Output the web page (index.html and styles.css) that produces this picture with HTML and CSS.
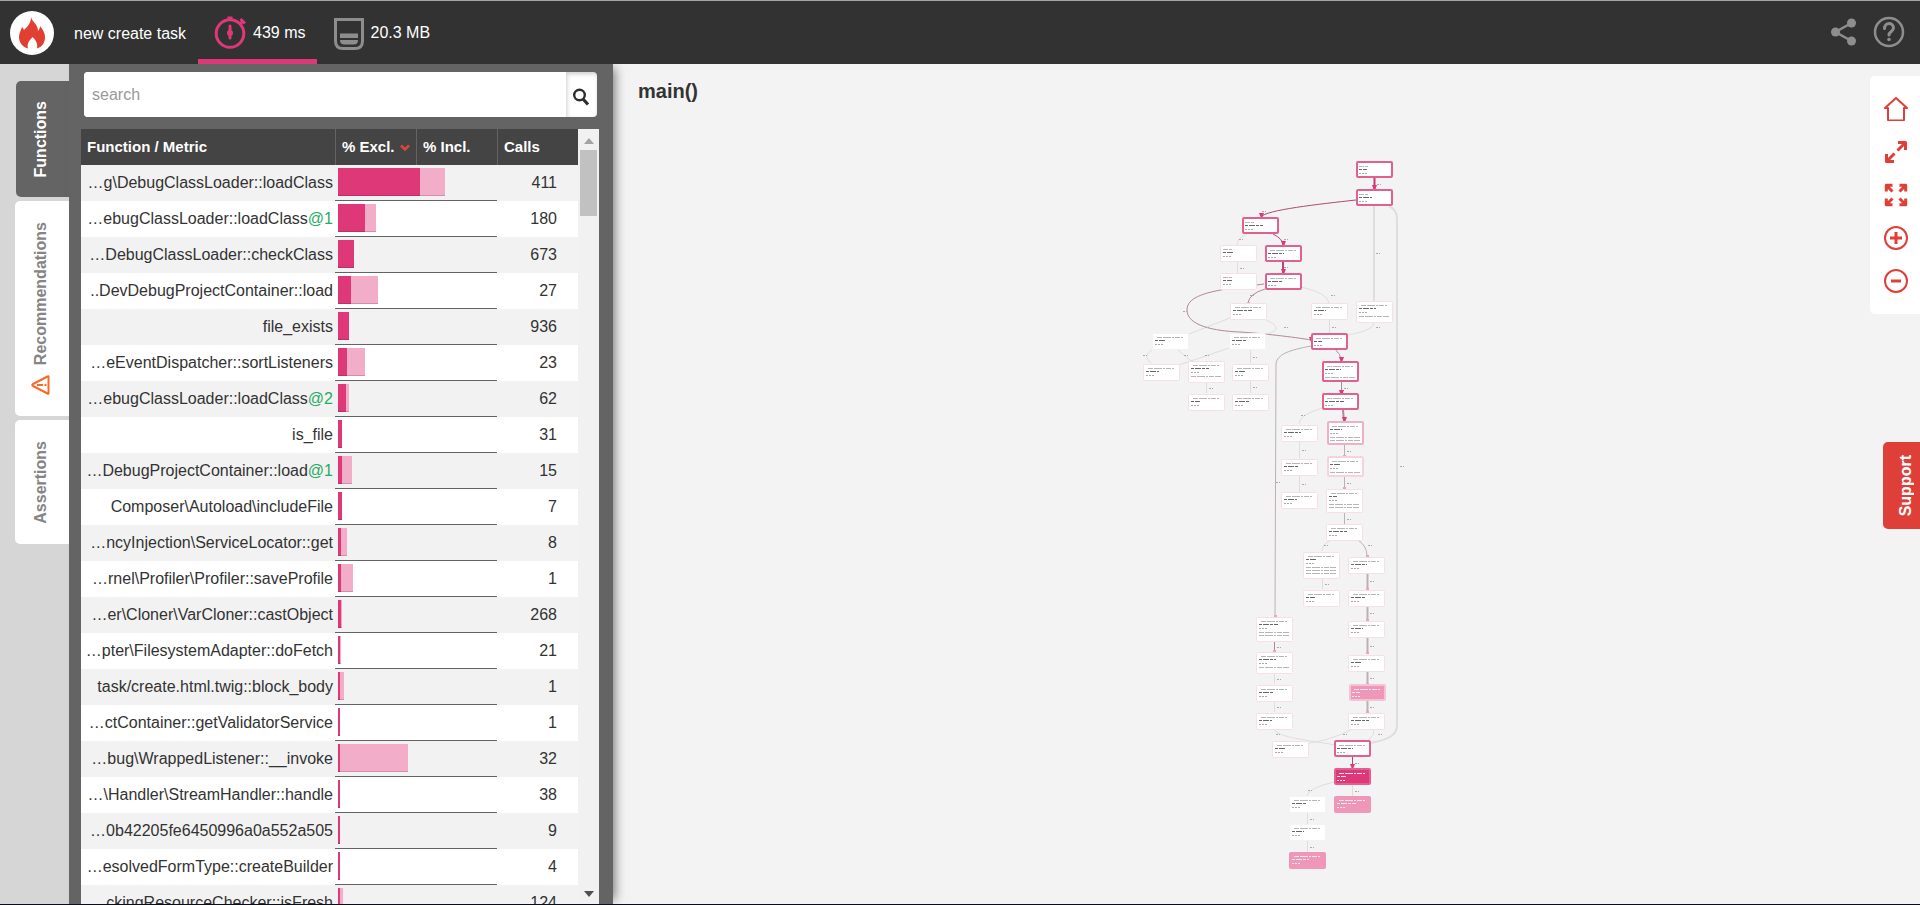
FILE: index.html
```html
<!DOCTYPE html>
<html lang="en">
<head>
<meta charset="utf-8">
<title>new create task</title>
<link rel="stylesheet" href="styles.css">
</head>
<body>
<header class="topbar">
  <a class="logo" href="#" aria-label="Home">
    <svg width="44" height="44" viewBox="0 0 44 44"><circle cx="22" cy="22" r="22" fill="#fff"/><path d="M21 6C22 11 28 13 28 20C29 19 30 17 30 15C33 19 35 22 35 26C35 32 32 36 27 37.500C28 33 26 29 22.500 26C20 29 16.500 32 18 37.500C12 36 9 31 9 26C9 22 11 19 12 16C13 17 13.500 18 14 19C18 15 21 12 21 6Z" fill="#e13f31"/></svg>
  </a>
  <h1 class="title">new create task</h1>
  <nav class="metrics">
    <a class="metric active" href="#">
      <svg width="34" height="34" viewBox="0 0 34 34" fill="none" stroke="#de3879" stroke-width="3"><circle cx="16" cy="18.500" r="13.800"/><path d="M13.500 3.500h5" stroke-width="4"/><path d="M26.500 4l4.500 4.500M29 6l-3 3"/><path d="M16 11v12" stroke-linecap="round"/><circle cx="16" cy="18" r="1.500"/></svg>
      <span>439 ms</span>
    </a>
    <a class="metric" href="#">
      <svg width="30" height="32" viewBox="0 0 30 32"><path d="M1.500 1.500h27V23q0 7.500-7.500 7.500H9Q1.500 30.500 1.500 23Z" fill="none" stroke="#8d8d8d" stroke-width="3"/><path d="M6 15.500h18v4.500H6zM6 22h18q0 4.500-4.500 4.500h-9Q6 26.500 6 22z" fill="#8d8d8d"/></svg>
      <span>20.3 MB</span>
    </a>
  </nav>
  <div class="actions">
    <button class="icon-btn" aria-label="Share"><svg width="26" height="28" viewBox="0 0 26 28" fill="#8e8e8e"><path d="M20.500 5L4.500 14L20.500 23" fill="none" stroke="#8e8e8e" stroke-width="2.500"/><circle cx="20.500" cy="5" r="4.500"/><circle cx="4.500" cy="14" r="4.500"/><circle cx="20.500" cy="23" r="4.500"/></svg></button>
    <button class="icon-btn" aria-label="Help"><svg width="32" height="32" viewBox="0 0 32 32" fill="none" stroke="#8e8e8e" stroke-width="2.500"><circle cx="16" cy="16" r="14"/><path d="M11.500 12.500C11.500 6 20.500 6 20.500 12C20.500 15.500 16 15.500 16 19" stroke-width="3" stroke-linecap="round"/><circle cx="16" cy="23.500" r="1.800" fill="#8e8e8e" stroke="none"/></svg></button>
  </div>
</header>
<main class="workspace">
  <nav class="tabs">
    <button class="tab selected"><span>Functions</span></button>
    <button class="tab"><span>Recommendations</span>
      <svg width="20" height="20" viewBox="0 0 20 20" fill="none" stroke="#fb6a22" stroke-width="2"><path d="M17.500 1.500V18.500Q17.500 19 16.500 18.500L2 11Q.500 10 2 9L16.500 1.500Q17.500 1 17.500 1.500Z" stroke-linejoin="round"/><path d="M6 10h6M13.500 10h2"/></svg>
    </button>
    <button class="tab"><span>Assertions</span></button>
  </nav>
  <section class="panel">
    <form class="search">
      <input type="text" placeholder="search" aria-label="search">
      <button type="button" aria-label="Run search"><svg width="18" height="20" viewBox="0 0 18 20" fill="none" stroke="#2d2d2d"><circle cx="7.500" cy="8" r="5.300" stroke-width="2.400"/><path d="M11 12l5 5.500" stroke-width="3.200"/></svg></button>
    </form>
    <div class="list">
      <div class="viewport">
        <table>
          <colgroup><col><col class="num"><col class="num"><col class="num"></colgroup>
          <thead><tr><th>Function / Metric</th><th>% Excl. <svg width="10" height="8" viewBox="0 0 10 8"><path d="M1 1.500l4 4 4-4" fill="none" stroke="#d8483f" stroke-width="2.500"/></svg></th><th>% Incl.</th><th>Calls</th></tr></thead>
          <tbody id="rows"></tbody>
        </table>
      </div>
      <div class="scrollbar">
        <svg width="10" height="6" viewBox="0 0 10 6"><path d="M0 6L5 0L10 6Z" fill="#a3a3a3"/></svg>
        <div class="thumb"></div>
        <svg class="down" width="10" height="6" viewBox="0 0 10 6"><path d="M0 0L5 6L10 0Z" fill="#505050"/></svg>
      </div>
    </div>
  </section>
  <section class="canvas">
    <h2>main()</h2>
    <svg id="graph" class="graph" viewBox="613 64 1307 840" preserveAspectRatio="xMidYMin meet" role="img" aria-label="Call graph"></svg>
    <div class="tools">
      <button class="icon-btn" aria-label="Reset"><svg width="24" height="24" viewBox="0 0 24 24"><path d="M4 11V22.500Q4 23.500 5 23.500H19Q20 23.500 20 22.500V11H23L12 1L1 11Z"/></svg></button>
      <button class="icon-btn" aria-label="Expand"><svg width="24" height="24" viewBox="0 0 24 24" stroke-width="3"><path class="heavy" d="M13.500 10.500L20 4M14 2.500h7.500V10M10.500 13.500L4 20M2.500 14v7.500H10"/></svg></button>
      <button class="icon-btn" aria-label="Fit"><svg width="24" height="24" viewBox="0 0 24 24"><path class="heavy" d="M8.500 8.500L3 3M2.300 8.500V2.300H8.500M15.500 8.500L21 3M15.500 2.300h6.200V8.500M8.500 15.500L3 21M2.300 15.500v6.200H8.500M15.500 15.500L21 21M21.700 15.500v6.200H15.500"/></svg></button>
      <button class="icon-btn" aria-label="Zoom in"><svg width="24" height="24" viewBox="0 0 24 24"><circle cx="12" cy="12" r="11"/><path class="heavy" d="M6 12h12M12 6v12"/></svg></button>
      <button class="icon-btn" aria-label="Zoom out"><svg width="24" height="24" viewBox="0 0 24 24"><circle cx="12" cy="12" r="11"/><path class="heavy" d="M7 12h10"/></svg></button>
    </div>
    <button class="support"><span>Support</span></button>
  </section>
</main>
<script src="app.js"></script>
</body>
</html>
```
FILE: styles.css
```css
* { box-sizing: border-box; }
body { margin: 0; height: 100vh; display: flex; flex-direction: column; overflow: hidden; border-top: 1px solid #a2a5a4; border-bottom: 1px solid #0b0d18; background: #f3f3f3; color: #333; font: 16px/20px "Liberation Sans", Arial, sans-serif; }
h1, h2 { margin: 0; }
button { border: 0; padding: 0; font: inherit; background: none; }
svg { display: block; flex: none; }

.topbar { position: relative; z-index: 2; display: flex; align-items: center; height: 63px; flex: none; padding: 0 15px 0 10px; background: #323232; color: #fff; }
.title { margin: 2px 12px 0 20px; font-size: 16px; font-weight: 400; }
.metrics { display: flex; align-self: stretch; }
.metric { display: flex; align-items: center; gap: 7px; padding: 5px 12px 0 17px; color: #fff; text-decoration: none; border-bottom: 5px solid transparent; }
.metric svg { margin-right: -2px; }
.metric + .metric svg { margin: 2px 0 0; }
.metric.active { padding: 5px 11px 0 16px; border-color: #de3879; }
.metric.active svg { margin-bottom: 2px; }
.actions { display: flex; align-items: center; gap: 16px; margin-left: auto; padding-bottom: 2px; }

.workspace { display: flex; flex: 1; min-height: 0; }
.tabs { display: flex; flex-direction: column; align-items: flex-end; gap: 4px; width: 69px; padding-top: 17px; background: #d6d6d6; }
.tab { display: flex; flex-direction: column; align-items: center; gap: 9px; width: 54px; padding: 21px 3px 21px 0; border-radius: 5px 0 0 5px; background: #fff; color: #858585; font-weight: 700; }
.tab.selected { width: 53px; padding: 20px 3px 20px 0; background: #646464; color: #fff; }
.tab span, .support span { writing-mode: vertical-rl; transform: rotate(180deg); }

.panel { display: flex; flex-direction: column; width: 544px; padding: 8px 14px 0 12px; background: #646464; position: relative; z-index: 1; box-shadow: 6px 0 10px -4px rgba(0, 0, 0, .5); }
.search { display: flex; height: 45px; flex: none; margin: 0 2px 12px 3px; overflow: hidden; border-radius: 4px; background: #fff; }
.search input { flex: 1; min-width: 0; padding: 0 8px; border: 0; background: #fff; font: inherit; }
.search input::placeholder { color: #999; }
.search button { display: flex; align-items: center; justify-content: center; width: 31px; padding: 4px 1px 0 0; box-shadow: inset 1px 2px 4px rgba(0, 0, 0, .2); }

.list { display: flex; flex: 1; min-height: 0; }
.viewport { flex: 1; overflow: hidden; background: #fff; }
table { width: 100%; table-layout: fixed; border-collapse: separate; border-spacing: 0; }
.num { width: 81px; }
th { height: 36px; padding: 0 6px; background: #444; color: #fff; font-size: 15px; text-align: left; white-space: nowrap; }
th + th { border-left: 1px solid #646464; }
th svg { display: inline-block; margin-left: 1px; }
td { height: 36px; padding: 0; }
tbody tr:nth-child(odd) { background: #f2f2f2; }
.name { padding: 0 2px 0 0; text-align: right; white-space: nowrap; overflow: hidden; }
.name em { color: #27ab62; font-style: normal; }
.share { padding: 3px 3px 4px; border-bottom: 1px solid #646464; }
.bar { display: flex; height: 28px; }
.bar i { background: #f2adc8; border-bottom: 1px solid #d48ead; }
.bar i:first-child { background: #de3879; border-color: #b5326a; }
.calls { padding: 0 21px 0 0; text-align: right; }

.scrollbar { display: flex; flex-direction: column; align-items: center; width: 21px; padding: 9px 0 7px; background: #f1f1f1; }
.thumb { width: 17px; height: 66px; margin-top: 6px; background: #c1c1c1; }
.down { margin-top: auto; }

.canvas { position: relative; flex: 1; min-width: 0; overflow: hidden; }
.canvas h2 { position: absolute; left: 25px; top: 15px; font-size: 20px; line-height: 24px; }
.graph { width: 100%; height: 100%; }
.tools { position: absolute; top: 12px; right: 0; display: flex; flex-direction: column; align-items: center; gap: 19px; width: 50px; padding: 21px 0 21px 1px; border-radius: 5px 0 0 5px; background: #fff; }
.tools svg { fill: none; stroke: #e03e38; stroke-width: 2; stroke-linejoin: round; }
.tools .heavy { stroke-width: 3; }
.support { position: absolute; right: 0; top: 378px; display: flex; justify-content: center; width: 37px; padding: 13px 0 13px 9px; border-radius: 5px 0 0 5px; background: #de3f39; color: #fff; font-weight: 700; }

.edge { fill: none; stroke: #dedede; stroke-width: 1; }
.edge.wide { stroke-width: 2; }
.edge.mid { stroke: #bcb0b5; }
.edge.warm { stroke: #b3879a; }
.edge.hot { stroke: #a94c72; }
.edge.main { stroke: #c23a70; stroke-width: 2; }
.tip { fill: #de3879; }
.tip.soft { fill: #e9a5be; }
.node { fill: #fff; stroke: #f8dfe7; }
.node.faint { stroke: #f7f1f3; }
.node.light { stroke: #f7d3df; stroke-width: 2; }
.node.pale { stroke: #efafc7; stroke-width: 2; }
.node.strong { stroke: #e2608f; stroke-width: 2; }
.node.pink { fill: #ee97b9; stroke: #ee97b9; }
.node.ring { fill: #ee97b9; stroke: #f4c3d5; stroke-width: 2; }
.node.full { fill: #de3879; stroke: #e2608f; stroke-width: 2; }
.ink { stroke: #b5b5b5; stroke-dasharray: 5 1 8 1 2 1; }
.ink.bold { stroke: #666; stroke-dasharray: 3 1 6 1; }
.ink.cost { stroke: #a9a9ae; stroke-dasharray: 2 1; }
.ink.white { stroke: #fbe6ee; }
```
FILE: app.js
```js
const rows = [
  ["…g\\DebugClassLoader::loadClass", "", 82, 25, 411],
  ["…ebugClassLoader::loadClass", "@1", 27, 11, 180],
  ["…DebugClassLoader::checkClass", "", 16, 0, 673],
  ["..DevDebugProjectContainer::load", "", 13, 27, 27],
  ["file_exists", "", 11, 0, 936],
  ["…eEventDispatcher::sortListeners", "", 9, 18, 23],
  ["…ebugClassLoader::loadClass", "@2", 8, 3, 62],
  ["is_file", "", 4, 0, 31],
  ["…DebugProjectContainer::load", "@1", 4, 10, 15],
  ["Composer\\Autoload\\includeFile", "", 4, 0, 7],
  ["…ncyInjection\\ServiceLocator::get", "", 3, 6, 8],
  ["…rnel\\Profiler\\Profiler::saveProfile", "", 3, 12, 1],
  ["…er\\Cloner\\VarCloner::castObject", "", 3, 1, 268],
  ["…pter\\FilesystemAdapter::doFetch", "", 2, 1, 21],
  ["task/create.html.twig::block_body", "", 2, 4, 1],
  ["…ctContainer::getValidatorService", "", 2, 0, 1],
  ["…bug\\WrappedListener::__invoke", "", 2, 68, 32],
  ["…\\Handler\\StreamHandler::handle", "", 2, 0, 38],
  ["…0b42205fe6450996a0a552a505", "", 2, 0, 9],
  ["…esolvedFormType::createBuilder", "", 2, 0, 4],
  ["…ckingResourceChecker::isFresh", "", 2, 3, 124]
];
document.getElementById("rows").innerHTML = rows.map(([name, depth, excl, incl, calls]) =>
  `<tr><td class="name">${name}${depth ? `<em>${depth}</em>` : ""}</td>` +
  `<td class="share" colspan="2"><div class="bar"><i style="width:${excl}px"></i><i style="width:${incl}px"></i></div></td>` +
  `<td class="calls">${calls}</td></tr>`).join("");

// x, y, height, style, extra argument lines
const nodes = [
  [1356,162,15,"strong"],[1356,190,15,"strong"],[1242,218,15,"strong"],[1220,245,16,""],[1265,246,15,"strong"],
  [1220,273,16,""],[1265,274,15,"strong"],[1230,303,16,""],[1311,303,16,""],[1356,301,21,"",1],
  [1152,333,16,"faint"],[1229,333,16,"faint"],[1311,334,15,"strong"],[1143,364,16,""],[1188,361,21,"",1],
  [1232,364,16,""],[1322,362,19,"strong",1],[1188,394,16,""],[1232,394,16,""],[1322,394,15,"strong"],
  [1327,422,22,"pale",2],[1281,425,16,""],[1327,457,19,"light",1],[1281,459,16,""],[1326,489,23,"",2],
  [1281,492,16,""],[1326,524,16,""],[1303,552,26,"",3],[1348,557,16,""],[1303,590,16,""],
  [1348,590,16,""],[1256,617,24,"",2],[1348,621,16,""],[1256,652,21,"",1],[1348,655,16,""],
  [1256,685,16,""],[1349,685,15,"ring"],[1256,713,16,""],[1348,713,16,""],[1272,741,16,""],
  [1334,741,15,"strong"],[1334,769,15,"full"],[1289,796,16,"faint"],[1334,796,16,"pink"],[1289,824,16,"faint"],[1289,852,16,"pink"]
];
const edges = [
  ["M1356 200C1320 204 1265 210 1261 217","hot"],["M1273 234Q1283 239 1283 245","hot"],["M1283 262V273","hot wide"],
  ["M1264 284C1225 289 1188 292 1187 309C1186 326 1215 331 1240 332C1270 334 1300 338 1311 340","warm"],
  ["M1247 234Q1237 238 1237 245",""],["M1265 289Q1249 294 1248 303","warm"],["M1301 287Q1328 293 1329 303",""],
  ["M1374 206V301","wide"],["M1389 206Q1397 210 1397 218V725C1397 735 1390 739 1371 743","wide"],
  ["M1374 322C1374 328 1365 332 1347 335",""],["M1230 318L1189 334",""],["M1266 320C1280 326 1279 331 1266 334",""],
  ["M1152 350Q1142 356 1151 363",""],["M1178 350L1191 361",""],["M1229 348L1179 365",""],
  ["M1335 349Q1341 354 1341 361","warm"],["M1343 410L1344 422","warm wide"],["M1322 408Q1299 415 1299 424",""],
  ["M1311 346C1290 350 1277 354 1276 364L1275 617","mid"],
  ["M1331 540Q1322 544 1322 551",""],["M1358 540Q1367 546 1367 556","mid"],
  ["M1274 729C1278 738 1310 740 1335 745",""],["M1352 729C1340 736 1320 742 1309 743",""],
  ["M1373 729Q1376 736 1366 741",""],["M1334 782Q1308 788 1307 796",""]
];
// x, top, bottom, style
const links = [
  [1374,178,189,"main"],[1237,262,273,""],[1329,320,333,""],[1250,350,363,""],[1206,382,393,""],[1250,380,393,""],
  [1341,382,394,"warm"],[1344,445,457,"mid"],[1344,477,489,"mid"],[1344,513,524,"mid"],[1299,442,458,""],[1299,475,492,""],
  [1322,578,589,""],[1367,573,589,"mid wide"],[1367,606,620,"mid wide"],[1367,637,654,"mid wide"],[1367,671,685,"mid wide"],[1367,701,712,"mid wide"],
  [1274,641,652,"warm"],[1274,673,684,""],[1274,701,712,""],[1352,757,768,"hot"],[1352,785,796,""],[1307,813,824,""],[1307,841,852,""]
];
// arrow tips and edge labels
const tips = [[1374,189,1],[1261,217,1],[1283,245,1],[1283,273,1],[1341,361,1],[1341,394,1],[1344,421,1],[1352,768,1],[1311,341,1],[1248,303,0],[1275,616,0],[1344,456,0],[1344,488,0],[1367,556,0],[1367,589,0],[1367,620,0],[1367,653,0],[1367,684,0],[1367,712,0],[1274,651,0]];
const labels = [[1262,211],[1239,239],[1284,239],[1284,267],[1250,295],[1331,295],[1376,253],[1183,311],[1284,327],[1376,327],[1205,327],[1143,355],[1184,355],[1205,355],[1301,415],[1276,482],[1400,466],[1324,545],[1368,545],[1276,734],[1343,734],[1378,734],[1308,790]];

const ink = (x, y, w, cls) => `<path class="ink ${cls}" d="M${x} ${y}.5h${w}"/>`;
let out = "";
for (const [d, cls] of edges) out += `<path class="edge ${cls}" d="${d}"/>`;
for (const [x, a, b, cls] of links) out += `<path class="edge ${cls}" d="M${x}.5 ${a}V${b}"/>` + ink(x + 3, Math.round((a + b) / 2), 4, "cost");
for (const [x, y, hot] of tips) out += hot ? `<path class="tip" d="M${x - 2} ${y - 4}h5l-2 5h-1z"/>` : `<path class="tip soft" d="M${x - 1} ${y - 1}h3v2h-3z"/>`;
for (const [x, y] of labels) out += ink(x, y, 4, "cost");
nodes.forEach(([x, y, h, cls, extra = 0], i) => {
  const thick = /strong|pale|light|ring|full/.test(cls);
  const tone = /pink|ring|full/.test(cls) ? "white" : "";
  const short = i < 6 && i !== 4;
  out += thick
    ? `<rect class="node ${cls}" x="${x + 1}" y="${y}" width="35" height="${h}" rx="1"/>`
    : `<rect class="node ${cls}" x="${x}.5" y="${y}.5" width="36" height="${h}" rx="1"/>`;
  out += ink(x + (short ? 3 : 5), y + 4, short ? 9 : 26, tone);
  out += ink(x + 3, y + 7, 8 + (i * 5) % 12, "bold " + tone);
  out += ink(x + 3, y + 11, 8, "cost " + tone);
  for (let n = 0; n < extra; n++) out += ink(x + 3, y + 15 + n * 3, 30, "");
});
document.getElementById("graph").innerHTML = out;
```
